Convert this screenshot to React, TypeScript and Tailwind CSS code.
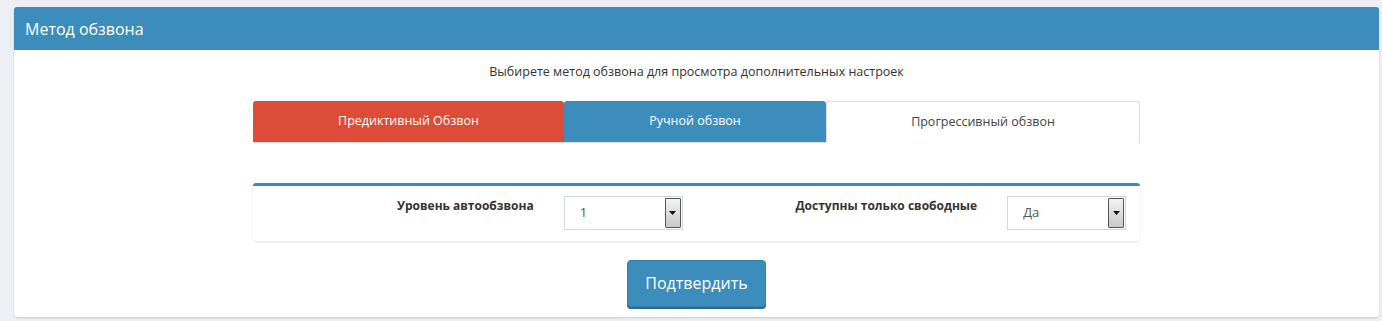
import { ReactNode } from 'react';

const font = { fontFamily: '"Open Sans", "Noto Sans", sans-serif' };

function FakeSelect({ value }: { value: string }) {
  return (
    <div className="flex h-[34px] w-[119px] items-stretch border border-[#d2d6de] bg-white">
      <span className="flex flex-1 items-center pl-[15px] text-[13px] text-[#555]">{value}</span>
      <span className="my-px mr-px flex w-[16px] items-center justify-center rounded-[1px] border border-[#555] bg-gradient-to-b from-[#f4f4f4] to-[#c9c9c9]">
        <svg width="7" height="4" viewBox="0 0 7 4">
          <path d="M0 0h7L3.5 4z" fill="#111" />
        </svg>
      </span>
    </div>
  );
}

function Field({ label, children }: { label: string; children: ReactNode }) {
  return (
    <div className="flex flex-1">
      <div className="w-2/3 px-[15px] pt-[1px] text-right text-[12px] font-bold text-[#333]">{label}</div>
      <div className="w-1/3 px-[15px]">{children}</div>
    </div>
  );
}

export default function App() {
  return (
    <div className="min-h-[321px] bg-[#ecf0f5] pl-[14px] pr-[3px] pt-[7px]" style={font}>
      <div className="overflow-hidden rounded-[3px] bg-white shadow-[0_1px_2px_rgba(0,0,0,0.15)]">
        <div className="flex h-[43px] items-center bg-[#3c8dbc] px-[11px] text-[16px] text-white">
          Метод обзвона
        </div>
        <div className="flex flex-col items-center pb-[10px]">
          <p className="mt-[13px] text-[12.5px] text-[#333]">Выбирете метод обзвона для просмотра дополнительных настроек</p>
          <div className="mt-[19px] flex h-[42px] w-[887px] text-[12.5px]">
            <div className="flex w-[311px] items-center justify-center rounded-t-[3px] border-b border-[#ddd] bg-[#dd4b39] text-white">
              Предиктивный Обзвон
            </div>
            <div className="flex w-[262px] items-center justify-center rounded-t-[3px] border-b border-[#ddd] bg-[#3c8dbc] text-white">
              Ручной обзвон
            </div>
            <div className="flex flex-1 items-center justify-center rounded-t-[3px] border border-b-0 border-[#ddd] bg-white text-[#444]">
              Прогрессивный обзвон
            </div>
          </div>
          <div className="mt-[40px] flex h-[58px] w-[887px] rounded-[3px] border-t-[3px] border-[#3c8dbc] bg-white pt-[10px] shadow-[0_1px_2px_rgba(0,0,0,0.12)]">
            <Field label="Уровень автообзвона">
              <FakeSelect value="1" />
            </Field>
            <Field label="Доступны только свободные">
              <FakeSelect value="Да" />
            </Field>
          </div>
          <button className="mt-[19px] h-[47px] w-[139px] rounded-[4px] border border-[#367fa9] bg-[#3c8dbc] text-[16px] text-white shadow-[0_2px_0_#2a6a91]">
            Подтвердить
          </button>
        </div>
      </div>
    </div>
  );
}
